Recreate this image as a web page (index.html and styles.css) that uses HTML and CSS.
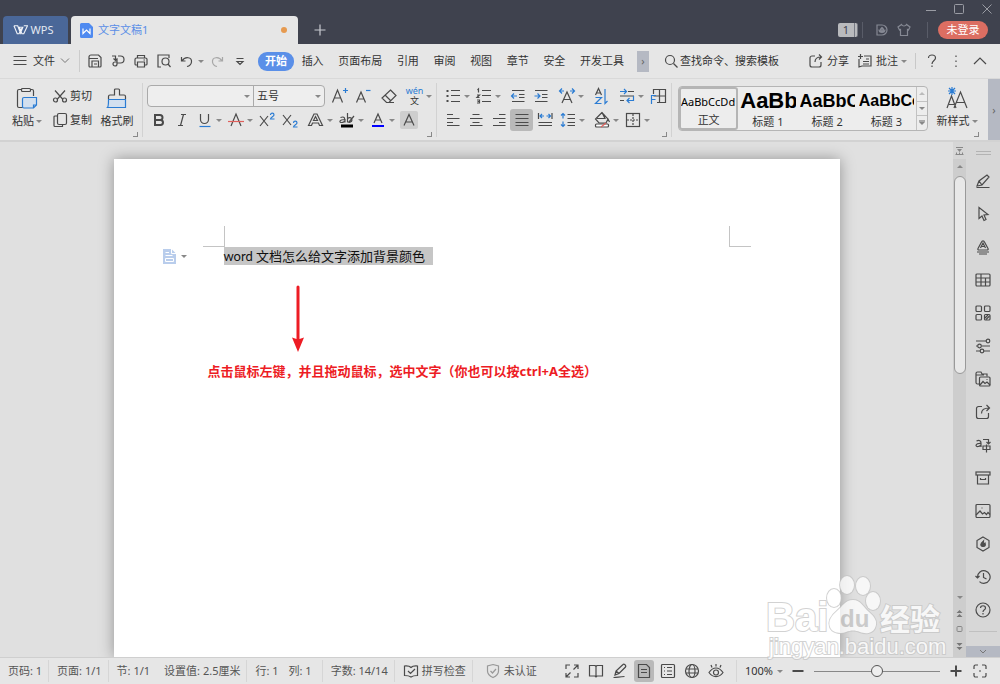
FILE: index.html
```html
<!DOCTYPE html>
<html lang="zh-CN">
<head>
    <meta charset="utf-8">
    <title>文字文稿1 - WPS</title>
    <link rel="stylesheet" href="styles.css">
</head>
<body>

<header class="titlebar">
  <button class="wps-tab">
    <svg class="wps-logo" viewBox="0 0 16 12"><path d="M1 1.500h4l3 8 2.500-6.500h-4l3 7h2l4-8.500h-4M1 1.500l3.500 8.500h2L9 4"/></svg>
    WPS
  </button>
  <div class="doc-tab">
    <svg class="doc-logo" viewBox="0 0 13 15"><path fill="#4f8af0" d="M1.500 0H9l4 4v9.500a1.500 1.500 0 0 1-1.500 1.500h-10A1.500 1.500 0 0 1 0 13.500v-12A1.500 1.500 0 0 1 1.500 0z"/><path fill="none" stroke="#fff" stroke-width="1.200" d="M3 5.500v5l3.500-3.500 3.500 3.500v-5"/></svg>
    <span>文字文稿1</span>
    <i class="unsaved"></i>
  </div>
  <button class="new-tab" aria-label="新建"><svg class="ic" viewBox="0 0 16 16"><path d="M8 2.500v11M2.500 8h11"/></svg></button>
  <div class="title-right">
    <div class="window-buttons">
      <button aria-label="最小化"><svg viewBox="0 0 10 10"><path d="M0 6.500h10"/></svg></button>
      <button aria-label="最大化"><svg viewBox="0 0 10 10"><rect x=".5" y=".5" width="9" height="9" rx="1"/></svg></button>
      <button aria-label="关闭"><svg viewBox="0 0 10 10"><path d="M.5.500l9 9M9.500.500l-9 9"/></svg></button>
    </div>
    <div class="account">
      <span class="badge">1</span>
      <i class="bar"></i>
      <button aria-label="稻壳"><svg class="ic" viewBox="0 0 16 16"><path d="M3 3h5a5 5 0 0 1 0 10H3zM8 5.500c2 1 2 3 0 5-2-2-2-4 0-5zM5 7.500c0 2 1 3 3 3 2 0 3-1 3-3M8 5v6"/></svg></button>
      <button aria-label="皮肤"><svg class="ic" viewBox="0 0 16 16"><path d="M5.500 2.500L2 5l1.500 3 1-.5v6h7v-6l1 .5L14 5l-3.500-2.500c-1 2-4 2-5 0z"/></svg></button>
      <i class="bar wide"></i>
      <button class="login">未登录</button>
    </div>
  </div>
</header>

<nav class="menubar">
  <button class="file"><svg class="ic" viewBox="0 0 16 16"><path d="M1.500 3.500h13M1.500 7.500h13M1.500 11.500h13"/></svg>文件<svg class="chev" viewBox="0 0 10 6"><path d="M1 .500l4 4 4-4"/></svg></button>
  <div class="quick">
    <button aria-label="保存"><svg class="ic" viewBox="0 0 16 16"><path d="M2 4a2 2 0 0 1 2-2h7.500L14 4.500V13a1 1 0 0 1-1 1H3a1 1 0 0 1-1-1zM5 14V8h6.500v6M2 5.500h9M7 11h3"/></svg></button>
    <button aria-label="输出为PDF"><svg class="ic" viewBox="0 0 16 16"><path d="M2 3h3.500v4M3.500 5.500l2 2 2-2M8 3h2.500a3.500 3.500 0 0 1 0 7H7v1a2 2 0 1 1-2-2h2V6"/></svg></button>
    <button aria-label="打印"><svg class="ic" viewBox="0 0 16 16"><path d="M4.500 5V2.500h7V5M4.500 12H3a1 1 0 0 1-1-1V6.500A1.500 1.500 0 0 1 3.500 5h9A1.500 1.500 0 0 1 14 6.500V11a1 1 0 0 1-1 1h-1.500M4.500 9h7v5h-7zM10.500 7h1.500"/></svg></button>
    <button aria-label="打印预览"><svg class="ic" viewBox="0 0 16 16"><path d="M5 14H2V2h11v3M12 11l2.500 3"/><circle cx="9.500" cy="8.500" r="3.500"/></svg></button>
    <button aria-label="撤销"><svg class="ic" viewBox="0 0 16 16"><path d="M2.500 4v4h4M3 8c3-5 10-4 9.500 1-.3 2.500-2 4-4.500 4.500"/></svg></button>
    <i class="caret"></i>
    <button class="off" aria-label="恢复"><svg class="ic" viewBox="0 0 16 16"><path d="M13.500 4v4h-4M13 8C10 3 3 4 3.500 9c.3 2.500 2 4 4.500 4.500"/></svg></button>
    <button aria-label="自定义"><svg class="ic" viewBox="0 0 16 16"><path d="M4.500 5.500h7M5 8.500h6l-3 3z"/></svg></button>
  </div>
  <div class="tabs">
    <button class="active">开始</button>
    <button>插入</button>
    <button>页面布局</button>
    <button>引用</button>
    <button>审阅</button>
    <button>视图</button>
    <button>章节</button>
    <button>安全</button>
    <button>开发工具</button>
  </div>
  <button class="more" aria-label="更多">›</button>
  <button class="search"><svg class="ic" viewBox="0 0 16 16"><circle cx="7" cy="7" r="4.500"/><path d="M10.500 10.500l4 4"/></svg>查找命令、搜索模板</button>
  <div class="menu-right">
    <button><svg class="ic" viewBox="0 0 16 16"><path d="M7 3H4a2 2 0 0 0-2 2v7a2 2 0 0 0 2 2h7a2 2 0 0 0 2-2V9M7 9c0-3 2-5 6-5M11 1.500L13.500 4 11 6.500"/></svg>分享</button>
    <button><svg class="ic" viewBox="0 0 16 16"><path d="M7 3h7v10H5l-3 1V6M1 3.500h5M3.500 1v5M9 6h3M6 8.500h6M6 11h6"/></svg>批注<i class="caret"></i></button>
    <i class="bar"></i>
    <button aria-label="帮助"><svg class="ic" viewBox="0 0 16 16"><path d="M4.500 5c0-4 7-4 7 0 0 2.500-3.500 2.500-3.500 6M8 12.500V14"/></svg></button>
    <button aria-label="菜单"><svg class="ic dots" viewBox="0 0 16 16"><path d="M8 2.500V4M8 7.500V9M8 12.500V14"/></svg></button>
    <button aria-label="收起"><svg class="ic" viewBox="0 0 16 16"><path d="M2 11l6-6 6 6"/></svg></button>
  </div>
</nav>

<section class="ribbon">
  <div class="group clip">
    <button class="big"><svg class="ic big-ic" viewBox="0 0 22 22"><path d="M6 2.500H3A1.500 1.500 0 0 0 1.500 4v15A1.500 1.500 0 0 0 3 20.500h4M14 2.500h2A1.500 1.500 0 0 1 17.500 4v5"/><rect x="5.500" y="1.500" width="9" height="3" rx="1"/><path class="b tint" d="M8 10.500h12.500V18l-3 3H8a1.500 1.500 0 0 1-1.500-1.500V12A1.500 1.500 0 0 1 8 10.500zM17.500 21v-3h3"/></svg><span>粘贴<i class="caret"></i></span></button>
    <div class="stack">
      <button><svg class="ic" viewBox="0 0 16 16"><path d="M3 2.500l8 9M13 2.500l-8 9"/><circle cx="3.500" cy="12" r="2"/><circle cx="12.500" cy="12" r="2"/></svg>剪切</button>
      <button><svg class="ic" viewBox="0 0 16 16"><rect x="5.500" y="1.500" width="9" height="11" rx="1.500"/><path d="M5.500 4H3a1 1 0 0 0-1 1v8.500a1 1 0 0 0 1 1h7.500v-2"/></svg>复制</button>
    </div>
    <button class="big"><svg class="ic big-ic" viewBox="0 0 22 22"><path d="M2.500 12V9.500A1.500 1.500 0 0 1 4 8h4.500V3a1 1 0 0 1 1-1h3a1 1 0 0 1 1 1v5H18a1.500 1.500 0 0 1 1.500 1.500V12"/><path class="b tint" d="M2.500 12.500h17v8H1.500c1-1 1-3 1-8z"/></svg><span>格式刷</span></button>
    <i class="launcher"></i>
  </div>

  <div class="group font">
    <div class="row">
      <div class="combo">
        <span class="drop family"><select aria-label="字体"><option></option></select></span>
        <span class="drop size"><select aria-label="字号"><option>五号</option></select></span>
      </div>
      <button class="sp" aria-label="增大字号"><svg class="ic" viewBox="0 0 18 18"><path d="M1.500 15.500L6.500 3l5 12.500M3.500 11h6"/><path class="b" d="M12 3.500h5M14.500 1v5"/></svg></button>
      <button aria-label="减小字号"><svg class="ic" viewBox="0 0 18 18"><path d="M2.500 15.500L7 5l4.500 10.500M4 12h6"/><path class="b" d="M12 3.500h4.500"/></svg></button>
      <button class="sp" aria-label="清除格式"><svg class="ic" viewBox="0 0 18 18"><path d="M10.500 3l5.500 5.500-7 7H6.500L2 11zM5 8l6 6M7 15.500h7"/></svg></button>
      <button class="sp" aria-label="拼音指南"><span class="pinyin"><b>wén</b><em>文</em></span></button><i class="caret"></i>
    </div>
    <div class="row">
      <button aria-label="加粗"><svg class="ic thick" viewBox="0 0 18 18"><path d="M5 4h5a2.500 2.500 0 0 1 0 5H5zM5 9h5.500a2.500 2.500 0 0 1 0 5H5z"/></svg></button>
      <button aria-label="倾斜"><svg class="ic" viewBox="0 0 18 18"><path d="M8 3.500h5M5 14.500h5M10.500 3.500l-3 11"/></svg></button>
      <button aria-label="下划线"><svg class="ic" viewBox="0 0 18 18"><path d="M4.500 3v5.500a4 4 0 0 0 8 0V3"/><path class="b" d="M3.500 15.500h11"/></svg></button><i class="caret"></i>
      <button aria-label="删除线"><svg class="ic" viewBox="0 0 18 18"><path d="M4 15L9 3l5 12"/><path class="r" d="M1 10.500h16"/></svg></button><i class="caret"></i>
      <button aria-label="上标"><svg class="ic" viewBox="0 0 18 18"><path d="M2 5l8 10M10 5L2 15"/><path class="b" d="M12.500 4c0-2.500 3.500-2.500 3.500 0 0 1.500-3.500 2-3.500 4H16.500"/></svg></button>
      <button aria-label="下标"><svg class="ic" viewBox="0 0 18 18"><path d="M2 4l8 10M10 4L2 14"/><path class="b" d="M12.500 12c0-2.500 3.500-2.500 3.500 0 0 1.500-3.500 2-3.500 4H16.500"/></svg></button>
      <button class="sp" aria-label="文字效果"><svg class="ic" viewBox="0 0 18 18"><path d="M1.500 14.500L7 3h3l5.500 11.500h-3L11.500 12h-6l-1 2.500zM6.500 9.500L8.500 5.500l2 4z"/></svg></button><i class="caret"></i>
      <button aria-label="突出显示"><svg class="ic" viewBox="0 0 18 18"><path d="M2.500 6.500c4-1.500 4.500 0 4.500 5V8.500c-6 0-6 3-3.500 3 1.500 0 3.500-1 3.500-2M9.500 2v9.500M9.500 8c1-2.500 4.500-1.500 4.500 1s-3.500 3-4.500 1.500M11 11l5-6"/><path stroke="#000" stroke-width="3" d="M3 15h12"/></svg></button><i class="caret"></i>
      <button aria-label="字体颜色"><svg class="ic" viewBox="0 0 18 18"><path d="M5 12L9 3l4 9M6.500 9h5"/><path stroke="#00f" stroke-width="2" d="M3 15h12"/></svg></button><i class="caret"></i>
      <button aria-label="字符底纹"><svg class="ic shade" viewBox="0 0 18 18"><path d="M4 14.500L9 3.500l5 11M6 11h6"/></svg></button>
    </div>
    <i class="launcher"></i>
  </div>

  <div class="group para">
    <div class="row">
      <button aria-label="项目符号"><svg class="ic" viewBox="0 0 18 18"><path d="M7 3.500h9M7 8.500h9M7 14.500h9"/><path class="dot" d="M2.500 4h2M2.500 9h2M2.500 14h2"/></svg></button><i class="caret"></i>
      <button aria-label="编号"><svg class="ic" viewBox="0 0 18 18"><path d="M7 3.500h9M7 8.500h9M7 14.500h9M2.500 3l1-1v3.500M2 8h2.500L2 10.500h2.500M2 13h2.500v3H2M2.500 14.500h2"/></svg></button><i class="caret"></i>
      <button class="sp" aria-label="减少缩进"><svg class="ic" viewBox="0 0 18 18"><path d="M3 3.500h12.500M10 7.500h5.500M10 10.500h5.500M3 14.500h12.500"/><path class="b" d="M8 9H2.500M5 6.500L2.500 9 5 11.500"/></svg></button>
      <button aria-label="增加缩进"><svg class="ic" viewBox="0 0 18 18"><path d="M3 3.500h12.500M10 7.500h5.500M10 10.500h5.500M3 14.500h12.500"/><path class="b" d="M2.500 9H8M5.500 6.500L8 9l-2.500 2.500"/></svg></button>
      <button class="sp" aria-label="中文版式"><svg class="ic" viewBox="0 0 18 18"><path d="M4 16L9 5l5 11M5.500 12.500h7"/><path class="b" d="M6 4H2M4 1.500L1.500 4 4 6.500M12 4h4M14 1.500L16.500 4 14 6.500"/></svg></button><i class="caret"></i>
      <button class="sp" aria-label="排序"><svg class="ic" viewBox="0 0 18 18"><path d="M3.500 8L6.500 1.500 9.500 8M4.500 6h4"/><path class="b" d="M3.500 10.500h6l-6 6h6M13 2v14.500l2.500-2.500"/></svg></button>
      <button class="sp" aria-label="换行"><svg class="ic" viewBox="0 0 18 18"><path d="M10 4.500h6M2 9h14M2 13.500h4"/><path class="b" d="M2 4.500h6M6 2l2.500 2.500L6 7M15.500 9v4.500H9M11.500 11L9 13.500l2.500 2.500"/></svg></button><i class="caret"></i>
      <button aria-label="制表位"><svg class="ic" viewBox="0 0 18 18"><path d="M4.500 7V2.500h12v13H8M10.500 2.500v13M4.500 9h12"/><path class="b" d="M2.500 17V8.500H7M2.500 12.500H6.500"/></svg></button>
    </div>
    <div class="row">
      <button aria-label="左对齐"><svg class="ic" viewBox="0 0 18 18"><path d="M3 3.500h6M3 7.500h12.500M3 11.500h6M3 14.500h12.500"/></svg></button>
      <button aria-label="居中"><svg class="ic" viewBox="0 0 18 18"><path d="M5.500 3.500h7M3 7.500h12.500M5.500 11.500h7M3 14.500h12.500"/></svg></button>
      <button aria-label="右对齐"><svg class="ic" viewBox="0 0 18 18"><path d="M9 3.500h6.500M3 7.500h12.500M9 11.500h6.500M3 14.500h12.500"/></svg></button>
      <button class="on" aria-label="两端对齐"><svg class="ic" viewBox="0 0 18 18"><path d="M2.500 3.500h13M2.500 7.500h13M2.500 11.500h13M2.500 14.500h13"/></svg></button>
      <button aria-label="分散对齐"><svg class="ic" viewBox="0 0 18 18"><path d="M2.500 2v6M16 2v6M2.500 11.500H16M2.500 14.500H16"/><path class="b" d="M8 5H4.500M6 3L4 5l2 2M10.500 5H14M12.500 3l2 2-2 2"/></svg></button>
      <button aria-label="行距"><svg class="ic" viewBox="0 0 18 18"><path d="M8.500 3.500H16M8.500 7.500H16M8.500 11.500H16M8.500 14.500H16"/><path class="b" d="M4 2.500v5M2 4.500l2-2 2 2M4 10.500v5M2 13.500l2 2 2-2"/></svg></button><i class="caret"></i>
      <button class="sp" aria-label="底纹"><svg class="ic" viewBox="0 0 18 18"><path d="M9 1.500L2.500 8 6 12h7l2-4zM4 7.500h8l-3-6M15 8l1.500 3"/><rect fill="#fff" x="2.500" y="13" width="13" height="3" rx="1"/><path class="r" d="M8 16l5-4"/></svg></button><i class="caret"></i>
      <button aria-label="边框"><svg class="ic" viewBox="0 0 18 18"><rect x="2.500" y="2.500" width="13" height="13"/><path stroke-dasharray="2 1" d="M9 3v12M3 9h12"/></svg></button><i class="caret"></i>
    </div>
    <i class="launcher"></i>
  </div>

  <div class="group styles">
    <div class="gallery">
      <button class="style sel"><span class="normal">AaBbCcDd</span>正文</button>
      <button class="style"><span class="h1">AaBb</span>标题 1</button>
      <button class="style"><span class="h2">AaBbC</span>标题 2</button>
      <button class="style"><span class="h3">AaBbCc</span>标题 3</button>
      <div class="spin">
        <button aria-label="上一行"><i class="caret up"></i></button>
        <button aria-label="下一行"><i class="caret"></i></button>
        <button class="all" aria-label="全部样式"><i class="caret"></i></button>
      </div>
    </div>
    <button class="big"><svg class="ic big-ic" viewBox="0 0 22 22"><path d="M1 21L5.500 9 10 21M3 17.500h5M8 21l6.500-16L21 21M10.500 15.500h8"/><path class="b" d="M6 0v8M2 4h8M3 1l6 6M9 1L3 7"/></svg><span>新样式<i class="caret"></i></span></button>
    <i class="launcher"></i>
  </div>
  <button class="more tall" aria-label="更多">›</button>
</section>

<main class="workspace">
  <div class="canvas">
    <article class="page">
      <div class="corners"><i class="corner left"></i><i class="corner right"></i></div>
      <div class="line">
        <button class="paste-tag" aria-label="粘贴选项"><svg viewBox="0 0 13 15"><path fill="#b9cdec" d="M0 0h8.500L13 4.500V15H0z"/><path fill="none" stroke="#fff" d="M8.500 0v4.500H13M2.500 3.500H6M2.500 6.500h7M2.500 9.500h8v3h-8z"/></svg><i class="caret"></i></button>
        <p class="selection">word 文档怎么给文字添加背景颜色</p>
      </div>
      <svg class="arrow" viewBox="0 0 12 68"><path fill="#ed1c24" d="M4.500 2a1.500 1.500 0 0 1 3 0v52L12 52.500 6 67 0 52.500l4.500 1.500z"/></svg>
      <p class="note">点击鼠标左键，并且拖动鼠标，选中文字（你也可以按ctrl+A全选）</p>
    </article>
  </div>

  <div class="scroll">
    <svg class="ruler" viewBox="0 0 13 17"><path fill="#888" d="M3 5h7v1H3zM4 7h5l-2.500 3z"/><path fill="none" stroke="#888" d="M2.500 12.500h8M3.500 10.500v2M6.500 10.500v2M9.500 10.500v2"/></svg>
    <i class="caret up"></i>
    <div class="thumb"></div>
    <div class="nav">
      <i class="caret"></i>
      <svg viewBox="0 0 13 52"><g fill="#777"><path d="M3.500 10l3-3 3 3zM3.500 14l3-3 3 3zM3.500 40h6l-3 3zM3.500 44h6l-3 3z"/></g><rect fill="none" stroke="#888" x="4" y="23.500" width="5" height="5" rx="1"/></svg>
    </div>
  </div>

  <aside class="side">
    <i class="grip"></i>
    <button aria-label="编辑"><svg class="ic" viewBox="0 0 16 16"><path d="M1.500 14.500h13M2 13l2-5 8-6 2 2-7 8zM4 8l3 4"/></svg></button>
    <button aria-label="选择"><svg class="ic" viewBox="0 0 16 16"><path d="M4 1.500v11l3-2.500 2 4.500 2-1-2-4.500 4-.5z"/></svg></button>
    <button aria-label="样式"><svg class="ic" viewBox="0 0 16 16"><path d="M3 9.500L6.500 3c.5-1.500 2.500-1.500 3 0l3.500 6.500c.5 1 0 1.500-1 1.500H4c-1 0-1.500-.5-1-1.500zM5.500 9L8 4l2.500 5M6 7.500h4M2 13h12M4 15h8"/></svg></button>
    <button aria-label="表格"><svg class="ic" viewBox="0 0 16 16"><rect x="1" y="2" width="14" height="12" rx="1"/><path d="M1 6h14M1 10h14M6 2v12M10.500 6v8"/></svg></button>
    <button aria-label="应用"><svg class="ic" viewBox="0 0 16 16"><rect x="1" y="1" width="5.500" height="5.500" rx="1"/><rect x="9.500" y="1" width="5.500" height="5.500" rx="1"/><rect x="1" y="9.500" width="5.500" height="5.500" rx="1"/><rect x="9.500" y="9.500" width="5.500" height="5.500" rx="1"/><path d="M10 13l3-3M11 14.500l3.500-3.500"/></svg></button>
    <button aria-label="属性"><svg class="ic" viewBox="0 0 16 16"><path d="M1 3h10M1 8h1.500M6.500 8H15M1 13h4M9 13h6"/><circle cx="13" cy="3" r="1.800"/><circle cx="4.500" cy="8" r="1.800"/><circle cx="7" cy="13" r="1.800"/></svg></button>
    <button aria-label="素材"><svg class="ic" viewBox="0 0 16 16"><path d="M4 13H2.500A1.500 1.500 0 0 1 1 11.500v-9A1.500 1.500 0 0 1 2.500 1H6l1 2h5v2.500M1 4h8"/><rect x="4.500" y="6" width="10.500" height="9" rx="1"/><path d="M5 14l3-3.500 2 2 2-1.500 3 3M11.500 8.500h1"/></svg></button>
    <button aria-label="分享"><svg class="ic" viewBox="0 0 16 16"><path d="M7 2.500H3.500a2 2 0 0 0-2 2v8a2 2 0 0 0 2 2h8a2 2 0 0 0 2-2V9M6.500 9.500C6.500 6 9 4 14 4M11.500 1L14.500 4l-3 3"/></svg></button>
    <button aria-label="翻译"><svg class="ic" viewBox="0 0 16 16"><path d="M1.500 4c3-1.500 4.500 0 4.500 2v4V6.500C0 6 0 10 3 9.500c1 0 3-1 3-2M8 2.500h5.500v4M11.500 5l2 2 2-2M8 9h7v3.500H8zM11.500 7.500v8"/></svg></button>
    <button aria-label="归档"><svg class="ic" viewBox="0 0 16 16"><rect x="1" y="2" width="14" height="3"/><path d="M2.500 5v9h11V5M5.500 8v1.500h5V8"/></svg></button>
    <button aria-label="图片"><svg class="ic" viewBox="0 0 16 16"><rect x="1" y="1.500" width="14" height="13" rx="1"/><path d="M1 12l4-4 2.500 3 2-1.500 2 2 1.500-2 2 2M6.500 5h1"/></svg></button>
    <button aria-label="云"><svg class="ic" viewBox="0 0 16 16"><path d="M8 1l6 3.500v7L8 15l-6-3.500v-7z"/><path fill="#555" d="M8.500 5L8 9l2-2c1 3-.5 3.500-2 3.500S5 9.500 6.500 7z"/></svg></button>
    <button aria-label="历史"><svg class="ic" viewBox="0 0 16 16"><path d="M2.500 8a6.300 6.300 0 1 1 2 4.600M0.500 7l2 2 2-2M8.500 4v4.500l3 1.500"/></svg></button>
    <button aria-label="帮助"><svg class="ic" viewBox="0 0 16 16"><circle cx="8" cy="8" r="7"/><path d="M5.500 6c0-3 5-3 5 0 0 2-2.500 1.500-2.500 4M8 11v1.500"/></svg></button>
    <i class="rule"></i>
    <button class="down" aria-label="更多"><svg class="chev" viewBox="0 0 10 6"><path d="M2 1l3 3 3-3"/></svg></button>
  </aside>

  <svg class="watermark" viewBox="0 0 190 92">
    <g class="wm-shape">
      <ellipse cx="69" cy="39" rx="7" ry="9"/>
      <ellipse cx="82" cy="26" rx="7" ry="9"/>
      <ellipse cx="98" cy="27" rx="7" ry="9"/>
      <ellipse cx="108" cy="42" rx="7" ry="9"/>
      <path d="M88 41c8 0 10 7 16 12s9 10 6 16-10 6-15 4-9-2-14 0-14 1-16-5 1-11 7-16 8-11 16-11z"/>
    </g>
    <text class="wm-bai" x="1" y="72">Bai</text>
    <text class="wm-du" x="75" y="68">du</text>
    <text class="wm-cn" x="115" y="71">经验</text>
    <text class="wm-url" x="4" y="95">jingyan.baidu.com</text>
  </svg>
</main>

<footer class="statusbar">
  <span class="cell">页码: 1</span>
  <span class="cell">页面: 1/1</span>
  <span class="cell two"><span>节: 1/1</span><span>设置值: 2.5厘米</span></span>
  <span class="cell two near"><span>行: 1</span><span>列: 1</span></span>
  <span class="cell">字数: 14/14</span>
  <button class="cell"><svg class="ic" viewBox="0 0 16 16"><path d="M8 4.500C6 2.500 4 3 1.500 3v9.500C4 12.500 6 12.500 8 14c2-1.500 4-1.500 6.500-1.500V3C12 3 10 2.500 8 4.500zM5 8l2.500 2.500L12 6"/></svg>拼写检查</button>
  <button class="cert"><svg class="ic" viewBox="0 0 16 16"><path d="M8 1.500L13.500 3v5c0 3-2 5-5.500 6.500C4.500 13 2.500 11 2.500 8V3zM5.500 8l2 2L11 6"/></svg>未认证</button>
  <div class="views">
    <button aria-label="全屏"><svg class="ic" viewBox="0 0 16 16"><path d="M2 6V2h4M10 2h4v4M14 10v4h-4M6 14H2v-4M14 2L9.500 6.500M2 14l4.500-4.500"/></svg></button>
    <button aria-label="阅读"><svg class="ic" viewBox="0 0 16 16"><path d="M8 3.500L7 2.500H1.500V13H7l1 1 1-1h5.500V2.500H9zM8 3.500V14"/></svg></button>
    <button aria-label="写作"><svg class="ic" viewBox="0 0 16 16"><path d="M3 12l1-4 7-6.500c1-1 3.500 1 2.500 2.500L7 10.500zM4 8l3 2.500M1.500 14.500c4 0 6-1 11-1"/></svg></button>
    <button class="on" aria-label="页面视图"><svg class="ic" viewBox="0 0 16 16"><path d="M2.500 1.500h8l3 3v10h-11zM5 6.500h6M5 9.500h6"/></svg></button>
    <button aria-label="大纲"><svg class="ic" viewBox="0 0 16 16"><rect x="1.500" y="1.500" width="13" height="13" rx="1"/><path d="M4 4.500h1M7 4.500h5M4 8h1M7 8h5M4 11.500h1M7 11.500h5"/></svg></button>
    <button aria-label="Web版式"><svg class="ic" viewBox="0 0 16 16"><circle cx="8" cy="8" r="6.500"/><ellipse cx="8" cy="8" rx="3" ry="6.500"/><path d="M2 6h12M2 10h12"/></svg></button>
    <button aria-label="护眼"><svg class="ic" viewBox="0 0 16 16"><path d="M1 9.500c4-6 10-6 14 0-4 5.500-10 5.500-14 0zM8 3.500V1M4 4.500L3 2M12 4.500L13 2"/><circle cx="8" cy="9.500" r="2.500"/></svg></button>
  </div>
  <div class="zoom">
    <button class="pct">100%<i class="caret"></i></button>
    <button aria-label="缩小"><svg class="ic bold" viewBox="0 0 16 16"><path d="M2.500 8h11"/></svg></button>
    <input type="range" min="0" max="200" value="100" aria-label="缩放">
    <button aria-label="放大"><svg class="ic bold" viewBox="0 0 16 16"><path d="M2.500 8h11M8 2.500v11"/></svg></button>
    <button aria-label="适应窗口"><svg class="ic" viewBox="0 0 16 16"><path d="M2 6V3.500A1.500 1.500 0 0 1 3.500 2H6M10 2h2.500A1.500 1.500 0 0 1 14 3.500V6M14 10v2.500a1.500 1.500 0 0 1-1.500 1.500H10M6 14H3.500A1.500 1.500 0 0 1 2 12.500V10M7 8h2"/></svg></button>
  </div>
</footer>

</body>
</html>
```
FILE: styles.css
```css
* {
    box-sizing: border-box;
}

body {
    margin: 0;
    height: 100vh;
    display: flex;
    flex-direction: column;
    overflow: hidden;
    font-family: "Noto Sans", "Noto Sans CJK SC", sans-serif;
    font-size: 11px;
    line-height: 16px;
    color: #333;
    background: #e6e6e6;
}

p {
    margin: 0;
}

button {
    display: flex;
    align-items: center;
    justify-content: center;
    margin: 0;
    padding: 0;
    border: 0;
    background: none;
    font: inherit;
    color: inherit;
    white-space: nowrap;
}

svg {
    display: block;
    flex: none;
}

.ic {
    width: 16px;
    height: 16px;
    fill: none;
    stroke: #4a4a4a;
    stroke-width: 1.2;
}

.ic .b {
    stroke: #2b7cd3;
}

.ic .r {
    stroke: #e0605c;
}

.ic .tint {
    fill: #d3e0ef;
}

.ic .dot,
.ic.thick,
.ic.bold {
    stroke-width: 2;
}

.chev {
    width: 10px;
    height: 6px;
    fill: none;
    stroke: #777;
}

.caret {
    display: block;
    flex: none;
    border: 3px solid transparent;
    border-top-color: #888;
    border-bottom: 0;
}

.caret.up {
    border-top: 0;
    border-bottom: 3px solid #888;
}

/* title bar */
.titlebar {
    flex: none;
    display: flex;
    align-items: flex-end;
    height: 44px;
    padding-left: 3px;
    background: #3f424e;
}

.wps-tab {
    width: 65px;
    height: 28px;
    gap: 3px;
    margin-right: 3px;
    padding-right: 5px;
    border-radius: 4px 4px 0 0;
    background: #4a6798;
    color: #e4e9f2;
}

.wps-logo {
    width: 15px;
    height: 12px;
    fill: none;
    stroke: #f0f3f8;
    stroke-width: 1.2;
}

.doc-tab {
    display: flex;
    align-items: center;
    width: 227px;
    height: 28px;
    gap: 5px;
    padding: 0 11px 0 9px;
    border-radius: 4px 4px 0 0;
    background: #e6e6e6;
    color: #5a8ee6;
}

.doc-logo {
    width: 13px;
    height: 15px;
}

.unsaved {
    width: 6px;
    height: 6px;
    margin-left: auto;
    border-radius: 50%;
    background: #e69a50;
}

.new-tab {
    width: 44px;
    height: 28px;
}

.new-tab .ic {
    stroke: #c8cad0;
}

.title-right {
    margin-left: auto;
    height: 44px;
}

.window-buttons {
    display: flex;
    justify-content: flex-end;
    gap: 18px;
    height: 18px;
    padding-right: 8px;
}

.window-buttons svg {
    width: 10px;
    height: 10px;
    fill: none;
    stroke: #9a9ca4;
}

.account {
    display: flex;
    align-items: center;
    height: 23px;
    gap: 6px;
    padding-right: 12px;
}

.account .ic {
    stroke: #868994;
}

.badge {
    width: 20px;
    height: 14px;
    line-height: 14px;
    text-align: center;
    border-radius: 2px;
    border-right: 4px double #777a84;
    background: #b9babd;
    color: #3f424e;
}

.bar {
    flex: none;
    width: 1px;
    height: 16px;
    background: #c8c8c8;
}

.account .bar {
    margin: 0 5px 0 -2px;
    background: #595c68;
}

.account .bar.wide {
    margin: 0 4px 0 9px;
}

.login {
    width: 50px;
    height: 18px;
    border-radius: 9px;
    background: #dc6e62;
    color: #fff;
}

/* menu */
.menubar {
    flex: none;
    display: flex;
    align-items: center;
    height: 35px;
    padding: 0 12px;
    border-bottom: 1px solid #d9d9d9;
}

.file {
    width: 68px;
    height: 22px;
    justify-content: flex-start;
    gap: 5px;
    border-right: 1px solid #ccc;
}

.quick {
    display: flex;
    align-items: center;
    width: 178px;
    padding-left: 3px;
}

.quick button {
    width: 23px;
}

.quick .caret {
    margin-right: 1px;
}

.quick .off {
    opacity: .4;
}

.tabs {
    display: flex;
    justify-content: space-between;
    width: 373px;
}

.tabs button {
    height: 19px;
    padding: 0 7px;
    border-radius: 9px;
}

.tabs .active {
    background: #5a8fe8;
    color: #fff;
    font-weight: bold;
}

.more {
    width: 12px;
    height: 21px;
    margin-left: 6px;
    background: #b5b9c3;
    color: #666;
}

.search {
    gap: 1px;
    margin-left: 14px;
}

.menu-right {
    display: flex;
    align-items: center;
    gap: 8px;
    margin-left: auto;
}

.menu-right button {
    gap: 3px;
}

/* ribbon */
.ribbon {
    flex: none;
    display: flex;
    height: 63px;
    border-bottom: 2px solid #d2d2d2;
}

.group {
    position: relative;
    padding: 5px 3px 8px 4px;
}

.group::after {
    content: "";
    position: absolute;
    top: 4px;
    right: 0;
    width: 1px;
    height: 54px;
    background: #d2d2d2;
}

.launcher {
    position: absolute;
    right: 5px;
    bottom: 3px;
    width: 5px;
    height: 5px;
    border: solid #888;
    border-width: 0 1px 1px 0;
}

.clip,
.styles {
    display: flex;
    align-items: flex-start;
}

.clip {
    gap: 7px;
    padding-right: 8px;
    padding-left: 9px;
}

.big {
    flex-direction: column;
    width: 36px;
    gap: 4px;
    padding-top: 3px;
}

.big span {
    display: flex;
    align-items: center;
    gap: 2px;
}

.big-ic {
    width: 22px;
    height: 22px;
}

.stack button {
    height: 24px;
    gap: 2px;
}

.row {
    display: flex;
    align-items: center;
    height: 24px;
}

.row .ic {
    width: 18px;
    height: 18px;
}

.row button {
    width: 23px;
    height: 22px;
}

.row .caret {
    margin-right: 2px;
}

.row .sp {
    margin-left: 3px;
}

.row .on,
.views .on {
    border-radius: 3px;
    background: #b9b9b9;
}

.shade {
    border-radius: 2px;
    background: #cecece;
}

.combo {
    display: flex;
    width: 178px;
    height: 22px;
    border: 1px solid #aaa;
    border-radius: 4px;
    background: #eee;
}

.drop {
    position: relative;
    display: flex;
}

.family {
    flex: 3;
    border-right: 1px solid #aaa;
}

.size {
    flex: 2;
}

.drop::after {
    content: "";
    position: absolute;
    top: 9px;
    right: 3px;
    border: 3px solid transparent;
    border-top-color: #888;
    border-bottom: 0;
}

.drop select {
    appearance: none;
    width: 100%;
    padding: 0 3px;
    border: 0;
    background: none;
    font: inherit;
    color: inherit;
}

.pinyin {
    display: flex;
    flex-direction: column;
    align-items: center;
}

.pinyin b,
.pinyin em {
    font-size: 9px;
    line-height: 10px;
    font-style: normal;
}

.pinyin b {
    font-weight: normal;
    color: #2b7cd3;
}

.styles {
    gap: 5px;
    padding-left: 6px;
}

.styles::after {
    display: none;
}

.styles .big {
    width: 48px;
}

.gallery {
    display: flex;
    width: 250px;
    height: 45px;
    margin-top: 2px;
    border: 1px solid #b5b5b5;
    border-radius: 4px;
    background: #ededed;
}

.style {
    flex: 1;
    min-width: 0;
    flex-direction: column;
    padding: 0 2px;
    overflow: hidden;
}

.style.sel {
    border: 2px solid #b5b5b5;
    border-radius: 3px;
    padding: 0;
}

.style span {
    align-self: stretch;
    height: 26px;
    line-height: 26px;
    overflow: hidden;
    text-align: left;
    font-family: "Liberation Sans", sans-serif;
    font-weight: bold;
    color: #000;
}

.style .normal {
    font-family: "Noto Sans", sans-serif;
    font-weight: normal;
}

.style .h1 {
    font-size: 22px;
}

.style .h2 {
    font-size: 18px;
}

.style .h3 {
    font-size: 16px;
}

.spin {
    display: flex;
    flex-direction: column;
    width: 11px;
    border-left: 1px solid #c2c2c2;
}

.spin button {
    flex: 1;
}

.spin button + button {
    border-top: 1px solid #c2c2c2;
}

.spin .caret.up {
    border-bottom-color: #bbb;
}

.spin .all .caret {
    box-shadow: 0 -2px 0 #aaa;
}

.more.tall {
    height: 61px;
    margin-left: auto;
}

/* document */
.workspace {
    position: relative;
    flex: 1;
    min-height: 0;
    display: flex;
}

.canvas {
    flex: 1;
    padding: 17px 16px 0;
    overflow: hidden;
    background: #e0e0e0;
}

.page {
    max-width: 726px;
    height: 100%;
    margin: 0 auto;
    padding-top: 67px;
    background: #fff;
    box-shadow: 0 0 14px rgba(0, 0, 0, .35);
}

.corners {
    display: flex;
    justify-content: space-between;
    padding: 0 89px;
}

.corner {
    width: 22px;
    height: 21px;
    border: solid #c4c4c4;
    border-width: 0 0 1px 1px;
}

.corner.left {
    border-width: 0 1px 1px 0;
}

.line {
    display: flex;
}

.paste-tag {
    width: 61px;
    justify-content: flex-start;
    gap: 5px;
    margin-left: 49px;
}

.paste-tag svg {
    width: 13px;
    height: 15px;
}

.selection {
    padding-right: 8px;
    font-size: 13px;
    line-height: 18px;
    font-family: Lato, "Noto Sans CJK SC", sans-serif;
    color: #111;
    background: #c6c6c6;
}

.arrow {
    width: 12px;
    height: 68px;
    margin: 20px 0 8px 178px;
}

.note {
    margin-left: 94px;
    font-size: 13px;
    line-height: 20px;
    font-weight: bold;
    color: #ed1c24;
}

.scroll {
    display: flex;
    flex-direction: column;
    align-items: center;
    width: 13px;
    background: #cdcdcd;
}

.ruler {
    width: 13px;
    height: 17px;
    margin-bottom: 6px;
    background: #d6d6d6;
}

.thumb {
    width: 12px;
    height: 198px;
    margin-top: 8px;
    border: 1px solid #999;
    border-radius: 6px;
    background: #e8e8e8;
}

.nav {
    display: flex;
    flex-direction: column;
    align-items: center;
    margin-top: auto;
}

.nav svg {
    width: 13px;
    height: 52px;
    margin: 4px 0 2px;
}

.side {
    display: flex;
    flex-direction: column;
    align-items: stretch;
    width: 34px;
    background: #d7d7d7;
}

.side button {
    height: 33px;
}

.grip {
    width: 15px;
    height: 4px;
    margin: 9px auto;
    border: solid #b3b3b3;
    border-width: 1px 0;
}

.rule {
    height: 1px;
    margin: 5px 3px 0;
    background: #c0c0c0;
}

.side .down {
    height: 11px;
    margin-top: auto;
    background: #b5b9c3;
}

.watermark {
    position: absolute;
    right: 45px;
    bottom: 6px;
    width: 190px;
    height: 92px;
    overflow: visible;
    opacity: .75;
    z-index: 1;
    pointer-events: none;
}

.wm-shape,
.watermark text {
    fill: #fff;
    stroke: #c4c4c4;
    stroke-width: 2px;
    paint-order: stroke;
    font-family: "Liberation Sans", "Noto Sans CJK SC", sans-serif;
}

.wm-bai {
    font-size: 40px;
    font-weight: bold;
}

.watermark .wm-du {
    font-size: 24px;
    font-weight: bold;
    fill: #c4c4c4;
    stroke: none;
}

.wm-cn {
    font-size: 30px;
    font-weight: bold;
}

.wm-url {
    font-size: 22px;
}

/* status bar */
.statusbar {
    flex: none;
    display: flex;
    align-items: center;
    height: 27px;
    border-top: 1px solid #cfcfcf;
    color: #555;
}

.cell {
    display: flex;
    align-items: center;
    height: 22px;
    gap: 3px;
    padding: 0 6px 0 8px;
    border-right: 1px solid #d6d6d6;
}

.two {
    gap: 14px;
}

.near {
    gap: 10px;
    padding-right: 10px;
}

.cert {
    gap: 3px;
    margin-left: 12px;
}

.cert .ic {
    stroke: #999;
}

.views {
    display: flex;
    margin-left: auto;
    padding-right: 10px;
    border-right: 1px solid #d6d6d6;
}

.views button {
    width: 20px;
    height: 22px;
    margin-left: 4px;
}

.zoom {
    display: flex;
    align-items: center;
    padding: 0 12px 0 8px;
}

.zoom button {
    height: 22px;
}

.pct {
    gap: 4px;
    margin-right: 7px;
    color: #333;
}

.zoom input {
    appearance: none;
    width: 126px;
    height: 12px;
    margin: 0 8px;
    background: linear-gradient(#888, #888) center / 100% 1px no-repeat;
}

.zoom input::-webkit-slider-thumb {
    appearance: none;
    width: 12px;
    height: 12px;
    border: 1px solid #555;
    border-radius: 50%;
    background: #eee;
}

.zoom input + button {
    margin-right: 8px;
}
```
